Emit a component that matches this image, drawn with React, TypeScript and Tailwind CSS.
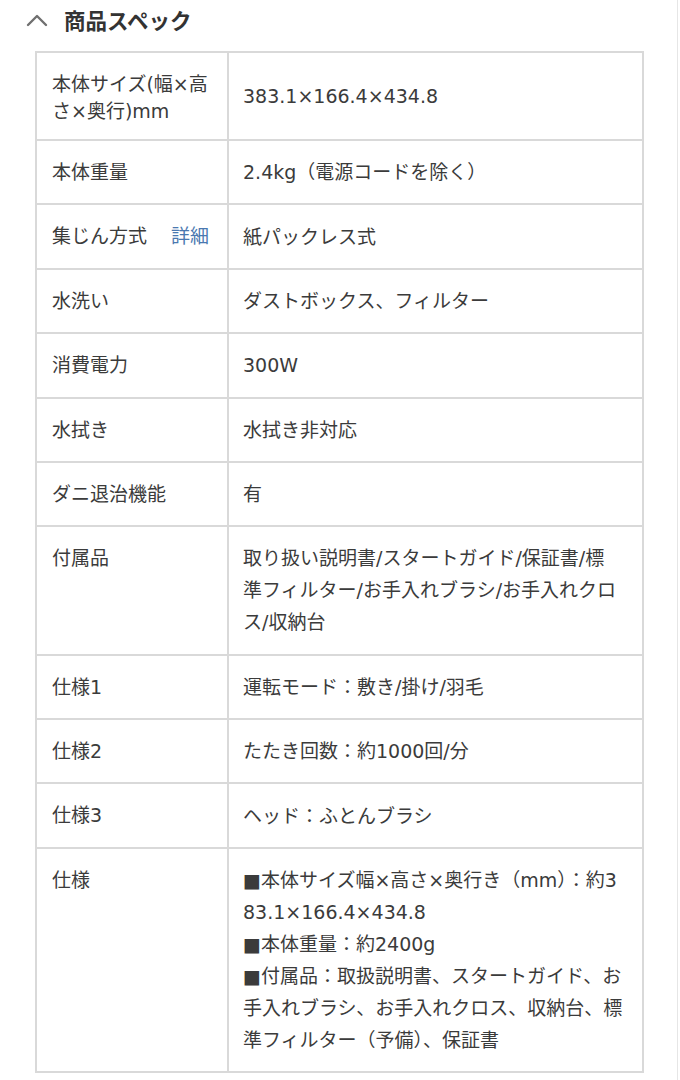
type Spec = {
  label: string;
  value: string[];
  detail?: boolean;
};

const specs: Spec[] = [
  { label: "本体サイズ(幅×高さ×奥行)mm", value: ["383.1×166.4×434.8"] },
  { label: "本体重量", value: ["2.4kg（電源コードを除く）"] },
  { label: "集じん方式", value: ["紙パックレス式"], detail: true },
  { label: "水洗い", value: ["ダストボックス、フィルター"] },
  { label: "消費電力", value: ["300W"] },
  { label: "水拭き", value: ["水拭き非対応"] },
  { label: "ダニ退治機能", value: ["有"] },
  {
    label: "付属品",
    value: [
      "取り扱い説明書/スタートガイド/保証書/標",
      "準フィルター/お手入れブラシ/お手入れクロ",
      "ス/収納台",
    ],
  },
  { label: "仕様1", value: ["運転モード：敷き/掛け/羽毛"] },
  { label: "仕様2", value: ["たたき回数：約1000回/分"] },
  { label: "仕様3", value: ["ヘッド：ふとんブラシ"] },
  {
    label: "仕様",
    value: [
      "■本体サイズ幅×高さ×奥行き（mm）：約3",
      "83.1×166.4×434.8",
      "■本体重量：約2400g",
      "■付属品：取扱説明書、スタートガイド、お",
      "手入れブラシ、お手入れクロス、収納台、標",
      "準フィルター（予備）、保証書",
    ],
  },
];

export default function App() {
  return (
    <div className="min-h-[1080px] w-[678px] border-r border-[#e6e6e6] bg-white font-['DejaVu_Sans','Noto_Sans_CJK_JP',sans-serif] text-[#3b3b3b]">
      <div className="flex h-[40px] items-center pl-[26px]">
        <svg width="22" height="14" viewBox="0 0 22 14" fill="none">
          <polyline
            points="2,12 11,3 20,12"
            stroke="#707070"
            strokeWidth="2.4"
            strokeLinecap="round"
            strokeLinejoin="round"
          />
        </svg>
        <h2 className="ml-[16px] font-['Noto_Sans_CJK_JP',sans-serif] text-[21.5px] font-bold leading-none text-[#333333]">
          商品スペック
        </h2>
      </div>

      <table className="mt-[11px] ml-[35px] w-[609px] table-fixed border-collapse">
        <colgroup>
          <col className="w-[192px]" />
          <col />
        </colgroup>
        <tbody>
          {specs.map((spec) => (
            <tr key={spec.label}>
              <th className="border-2 border-[#d9d9d9] pt-[18px] pr-[8px] pb-[14px] pl-[15px] text-left align-top text-[19px] font-normal leading-[27px] break-all">
                {spec.label}
                {spec.detail && (
                  <span className="ml-[24px] text-[#4a78b0]">詳細</span>
                )}
              </th>
              <td className="border-2 border-[#d9d9d9] py-[15.2px] pr-[8px] pl-[14px] align-middle text-[19px] leading-[32px] break-all">
                {spec.value.map((line, i) => (
                  <span key={i}>
                    {i > 0 && <br />}
                    {line}
                  </span>
                ))}
              </td>
            </tr>
          ))}
        </tbody>
      </table>
    </div>
  );
}
